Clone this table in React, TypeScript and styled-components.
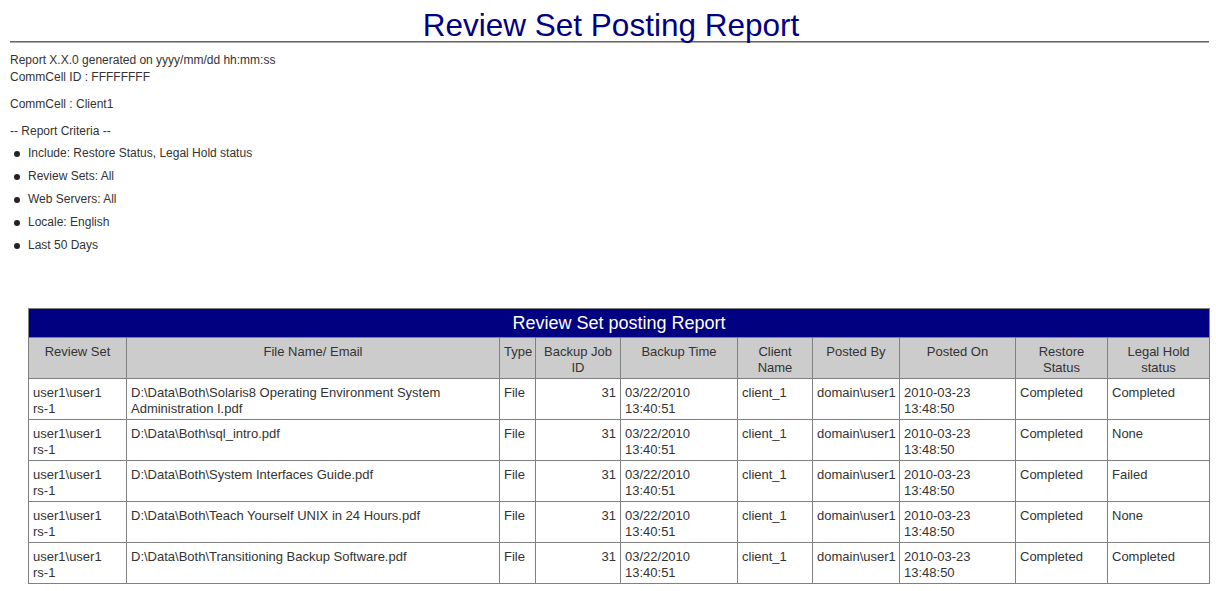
import React from "react";
import styled, { createGlobalStyle } from "styled-components";

const Global = createGlobalStyle`
  html, body { margin: 0; padding: 0; background: #fff; }
  body { font-family: "Liberation Sans", Arial, sans-serif; color: #333; }
`;

const Page = styled.div`
  padding: 0 7px 0 10px;
`;

const Title = styled.h1`
  margin: 9px 0 0;
  padding-left: 3px;
  font-size: 31.5px;
  line-height: 32px;
  font-weight: normal;
  text-align: center;
  color: #000080;
`;

const Rule = styled.div`
  height: 1px;
  border-top: 1px solid #666;
  background: #aaa;
`;

const Info = styled.div`
  margin-top: 9px;
  font-size: 12px;
  line-height: 17px;
`;

const Line = styled.div<{ $gap?: number }>`
  margin-top: ${(p) => p.$gap ?? 0}px;
`;

const Criteria = styled.ul`
  list-style: none;
  margin: 5px 0 0;
  padding: 0;
  font-size: 12px;
  line-height: 17px;
`;

const Item = styled.li`
  position: relative;
  padding-left: 18px;
  height: 17px;
  margin-bottom: 5.9px;
  &::before {
    content: "";
    position: absolute;
    left: 4px;
    top: 6px;
    width: 6px;
    height: 6px;
    border-radius: 50%;
    background: #222;
  }
`;

const Table = styled.table`
  margin: 54px 0 0 18px;
  width: 1182px;
  border-collapse: collapse;
  table-layout: fixed;
  font-size: 13px;
  line-height: 16px;
  color: #333;
`;

const Caption = styled.th`
  background: #000080;
  color: #fff;
  font-size: 18px;
  font-weight: normal;
  height: 29px;
  padding: 1px 0 0;
  box-sizing: border-box;
  border: 1px solid #808080;
  line-height: 20px;
`;

const Head = styled.th`
  background: #ccc;
  font-weight: normal;
  text-align: center;
  vertical-align: top;
  padding: 6px 4px 2px;
  height: 32px;
  border: 1px solid #808080;
  color: #333;
`;

const Cell = styled.td<{ $right?: boolean }>`
  text-align: ${(p) => (p.$right ? "right" : "left")};
  vertical-align: top;
  padding: 6px 4px 2px;
  height: 32px;
  border: 1px solid #808080;
`;

const widths = [98, 373, 36, 85, 117, 75, 87, 116, 92, 102];
const headers = [
  "Review Set",
  "File Name/ Email",
  "Type",
  "Backup Job ID",
  "Backup Time",
  "Client Name",
  "Posted By",
  "Posted On",
  "Restore Status",
  "Legal Hold status",
];

const files: [string, string][] = [
  ["D:\\Data\\Both\\Solaris8 Operating Environment System Administration I.pdf", "Completed"],
  ["D:\\Data\\Both\\sql_intro.pdf", "None"],
  ["D:\\Data\\Both\\System Interfaces Guide.pdf", "Failed"],
  ["D:\\Data\\Both\\Teach Yourself UNIX in 24 Hours.pdf", "None"],
  ["D:\\Data\\Both\\Transitioning Backup Software.pdf", "Completed"],
];

const criteria = [
  "Include: Restore Status, Legal Hold status",
  "Review Sets: All",
  "Web Servers: All",
  "Locale: English",
  "Last 50 Days",
];

export default function App() {
  return (
    <Page>
      <Global />
      <Title>Review Set Posting Report</Title>
      <Rule />
      <Info>
        <Line>Report X.X.0 generated on yyyy/mm/dd hh:mm:ss</Line>
        <Line>CommCell ID : FFFFFFFF</Line>
        <Line $gap={10}>CommCell : Client1</Line>
        <Line $gap={10}>-- Report Criteria --</Line>
      </Info>
      <Criteria>
        {criteria.map((c) => (
          <Item key={c}>{c}</Item>
        ))}
      </Criteria>
      <Table>
        <colgroup>
          {widths.map((w, i) => (
            <col key={i} style={{ width: w }} />
          ))}
        </colgroup>
        <thead>
          <tr>
            <Caption colSpan={10}>Review Set posting Report</Caption>
          </tr>
          <tr>
            {headers.map((h) => (
              <Head key={h}>{h}</Head>
            ))}
          </tr>
        </thead>
        <tbody>
          {files.map(([f, legal]) => (
            <tr key={f}>
              <Cell>
                user1\user1
                <br />
                rs-1
              </Cell>
              <Cell>{f}</Cell>
              <Cell>File</Cell>
              <Cell $right>31</Cell>
              <Cell>
                03/22/2010
                <br />
                13:40:51
              </Cell>
              <Cell>client_1</Cell>
              <Cell>domain\user1</Cell>
              <Cell>
                2010-03-23
                <br />
                13:48:50
              </Cell>
              <Cell>Completed</Cell>
              <Cell>{legal}</Cell>
            </tr>
          ))}
        </tbody>
      </Table>
    </Page>
  );
}
